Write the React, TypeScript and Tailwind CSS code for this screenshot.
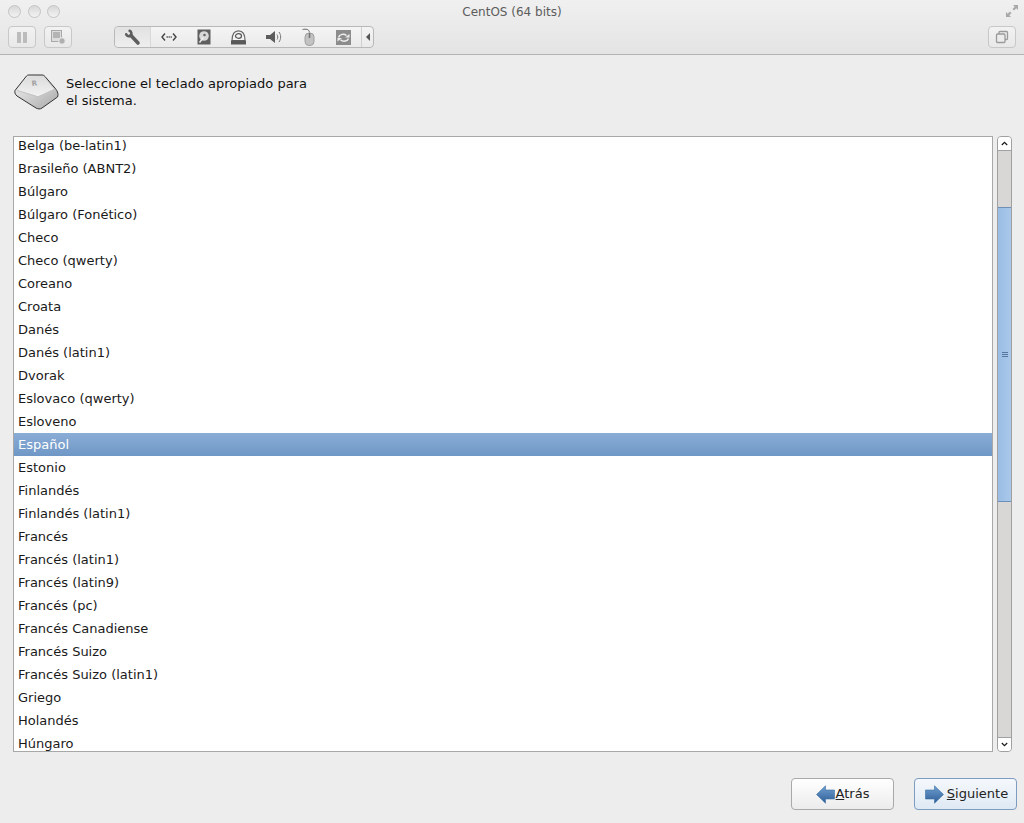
const layouts = [
  "Belga (be-latin1)",
  "Brasileño (ABNT2)",
  "Búlgaro",
  "Búlgaro (Fonético)",
  "Checo",
  "Checo (qwerty)",
  "Coreano",
  "Croata",
  "Danés",
  "Danés (latin1)",
  "Dvorak",
  "Eslovaco (qwerty)",
  "Esloveno",
  "Español",
  "Estonio",
  "Finlandés",
  "Finlandés (latin1)",
  "Francés",
  "Francés (latin1)",
  "Francés (latin9)",
  "Francés (pc)",
  "Francés Canadiense",
  "Francés Suizo",
  "Francés Suizo (latin1)",
  "Griego",
  "Holandés",
  "Húngaro",
]

const TrafficLight = () => (
  <span className="block w-[13px] h-[13px] rounded-full border border-[#c4c4c4] bg-gradient-to-b from-[#d8d8d8] to-[#f2f2f2]" />
)

const ToolButton = ({ children, className }: { children: React.ReactNode; className: string }) => (
  <div className={`h-[22px] flex items-center justify-center rounded-[4px] border border-[#c8c8c8] bg-gradient-to-b from-[#f2f2f2] to-[#e8e8e8] ${className}`}>
    {children}
  </div>
)

const Slot = ({ children }: { children: React.ReactNode }) => (
  <div className="w-[35px] shrink-0 flex items-center justify-center">{children}</div>
)

const Wrench = () => (
  <svg width="17" height="17" viewBox="0 0 17 17" fill="none" stroke="#5e5e5e" strokeLinecap="round">
    <path d="M7 6.500 L14 14" strokeWidth="3.600" />
    <path d="M2.200 5.200 C2.600 7.200 5 7.800 6.600 6.600 C8 5.200 7.600 2.600 5.600 1.800" strokeWidth="2.600" />
  </svg>
)

const Network = () => (
  <svg width="16" height="12" viewBox="0 0 16 12" fill="none" stroke="#444" strokeWidth="1.400">
    <path d="M4 2.500 L1 6 L4 9.500" />
    <path d="M12 2.500 L15 6 L12 9.500" />
    <path d="M5.500 6 H6.800 M7.600 6 H8.800 M9.600 6 H10.800" />
  </svg>
)

const HardDisk = () => (
  <svg width="14" height="16" viewBox="0 0 14 16">
    <rect x="0.500" y="0.500" width="13" height="15" fill="#5f5f5f" />
    <circle cx="7" cy="7" r="4.800" fill="#d8d8d8" />
    <circle cx="7.500" cy="6" r="1.300" fill="#666" />
    <path d="M2.500 13.500 L6.500 8.500" stroke="#f0f0f0" strokeWidth="1.400" />
  </svg>
)

const Disc = () => (
  <svg width="17" height="15" viewBox="0 0 17 15">
    <path d="M2 10.500 C2 4 4.500 0.800 8.500 0.800 C12.500 0.800 15 4 15 10.500 Z" fill="#f2f2f2" stroke="#666" strokeWidth="1.200" />
    <ellipse cx="8.500" cy="6" rx="3" ry="2.300" fill="none" stroke="#555" strokeWidth="1.200" />
    <rect x="1" y="10.500" width="15" height="4" fill="#5a5a5a" />
  </svg>
)

const Speaker = () => (
  <svg width="18" height="14" viewBox="0 0 18 14" fill="none">
    <path d="M1 5 H5 L10 1 V13 L5 9 H1 Z" fill="#5c5c5c" />
    <path d="M12 4.500 C13 6 13 8 12 9.500" stroke="#777" />
    <path d="M14 2 C16.200 5 16.200 9 14 12" stroke="#777" />
  </svg>
)

const Mouse = () => (
  <svg width="14" height="18" viewBox="0 0 14 18" fill="none">
    <path d="M0.500 1.500 C4 0.800 7 1 7.500 4.500" stroke="#666" />
    <rect x="3" y="5" width="9" height="12.500" rx="4" fill="#c2c2c2" stroke="#a0a0a0" />
    <path d="M7.500 5 V10" stroke="#777" strokeWidth="1.600" />
  </svg>
)

const Sync = () => (
  <svg width="15" height="15" viewBox="0 0 15 15">
    <rect width="15" height="15" fill="#8c8c8c" />
    <path d="M2.500 7.500 C3.500 4 8 3.300 10.500 5.500" fill="none" stroke="#eee" strokeWidth="1.500" />
    <path d="M9 7.500 L13.500 7.500 L13.500 4 Z" fill="#eee" />
    <path d="M12.500 8.500 C11.500 11.500 7 12 4.500 9.800" fill="none" stroke="#eee" strokeWidth="1.500" />
    <path d="M6 8 L1.500 8 L1.500 11.500 Z" fill="#eee" />
  </svg>
)

const Keycap = () => (
  <svg width="46" height="36" viewBox="0 0 46 36">
    <defs>
      <linearGradient id="keyFront" x1="0" y1="0" x2="1" y2="1">
        <stop offset="0" stopColor="#f6f6f6" />
        <stop offset="1" stopColor="#a8a8a8" />
      </linearGradient>
      <linearGradient id="keyTop" x1="0" y1="0" x2="0" y2="1">
        <stop offset="0" stopColor="#dcdcdc" />
        <stop offset="1" stopColor="#f2f2f2" />
      </linearGradient>
    </defs>
    <path d="M1 16.500 L12.500 2 C13 1.200 14 1 15 1 L28 1 C29.500 1 30 1.500 31 2.500 L40 13 C43 16 45 20 43.500 23 L28 34 C26 35.500 24 35 22 34 L3 22 C1 20.500 0.500 18 1 16.500 Z" fill="url(#keyFront)" stroke="#333" strokeWidth="1" />
    <path d="M3 16 L14 2.500 L29 2.500 L40 15 L26 21.500 C24.500 22.300 23 22.300 21.500 21.500 Z" fill="url(#keyTop)" />
    <path d="M3 16.500 L21.500 22 C23 22.800 24.500 22.800 26 22 L40.500 15.500" fill="none" stroke="#c4c4c4" />
    <text x="18" y="12" fontSize="7" fontWeight="bold" fill="#a0a0a0" fontFamily="DejaVu Sans, sans-serif" transform="rotate(-8 18 12)">R</text>
  </svg>
)

const ArrowLeft = () => (
  <svg width="19" height="19" viewBox="0 0 19 19">
    <defs>
      <linearGradient id="arrowL" x1="0" y1="0" x2="0" y2="1">
        <stop offset="0" stopColor="#6f9fd0" />
        <stop offset="1" stopColor="#2f5f98" />
      </linearGradient>
    </defs>
    <path d="M0.500 9.500 L9.500 0.800 V5 H18.500 V14 H9.500 V18.200 Z" fill="url(#arrowL)" stroke="#3a6ea5" strokeWidth="0.600" />
  </svg>
)

const ArrowRight = () => (
  <svg width="19" height="19" viewBox="0 0 19 19">
    <defs>
      <linearGradient id="arrowR" x1="0" y1="0" x2="0" y2="1">
        <stop offset="0" stopColor="#6f9fd0" />
        <stop offset="1" stopColor="#2f5f98" />
      </linearGradient>
    </defs>
    <path d="M18.500 9.500 L9.500 0.800 V5 H0.500 V14 H9.500 V18.200 Z" fill="url(#arrowR)" stroke="#3a6ea5" strokeWidth="0.600" />
  </svg>
)

const Chevron = ({ up }: { up?: boolean }) => (
  <svg width="7" height="5" viewBox="0 0 7 5" fill="none" stroke="#222" strokeWidth="1.300">
    <path d={up ? "M0.800 4 L3.500 1.300 L6.200 4" : "M0.800 1 L3.500 3.700 L6.200 1"} />
  </svg>
)

export default function App() {
  return (
    <div className="w-[1024px] h-[823px] overflow-hidden flex flex-col bg-[#ededed] text-[13px] text-[#1a1a1a] font-['DejaVu_Sans',sans-serif]">
      <header className="relative h-[55px] shrink-0 border-b border-[#b4b4b4] bg-gradient-to-b from-[#f0f0f0] to-[#e4e4e4] px-[8px] pt-[5px]">
        <div className="flex items-center gap-[6.500px] h-[13px]">
          <TrafficLight />
          <TrafficLight />
          <TrafficLight />
        </div>
        <div className="absolute top-[4px] inset-x-0 text-center text-[12px] leading-[17px] text-[#5c5c5c]">CentOS (64 bits)</div>
        <svg className="absolute top-[4px] right-[5px]" width="14" height="14" viewBox="0 0 14 14" fill="#a8a8a8">
          <path d="M8 1 H13 V6 L11.300 4.300 L9 6.500 L7.500 5 L9.700 2.700 Z" />
          <path d="M6 13 H1 V8 L2.700 9.700 L5 7.500 L6.500 9 L4.300 11.300 Z" />
        </svg>
        <div className="flex items-center mt-[8px]">
          <ToolButton className="w-[28px]">
            <div className="flex gap-[2px]">
              <span className="block w-[4px] h-[11px] bg-[#bcbcbc]" />
              <span className="block w-[4px] h-[11px] bg-[#bcbcbc]" />
            </div>
          </ToolButton>
          <ToolButton className="w-[28px] ml-[8px]">
            <svg width="16" height="16" viewBox="0 0 16 16">
              <rect x="1.500" y="1.500" width="10" height="11" fill="#ddd" stroke="#a8a8a8" />
              <rect x="3" y="3" width="7" height="6" fill="#b4b4b4" />
              <circle cx="12" cy="12" r="3.300" fill="#b0b0b0" stroke="#eee" />
            </svg>
          </ToolButton>
          <div className="ml-[42px] w-[260px] h-[22px] flex items-center rounded-[4px] border border-[#b8b8b8] bg-gradient-to-b from-[#f4f4f4] to-[#eaeaea]">
            <div className="w-[36px] shrink-0 h-full flex items-center justify-center rounded-l-[4px] bg-gradient-to-b from-[#e2e2e2] to-[#eeeeee] border-r border-[#d8d8d8]">
              <Wrench />
            </div>
            <Slot><Network /></Slot>
            <Slot><HardDisk /></Slot>
            <Slot><Disc /></Slot>
            <Slot><Speaker /></Slot>
            <Slot><Mouse /></Slot>
            <Slot><Sync /></Slot>
            <div className="flex-1 h-full flex items-center justify-center border-l border-[#d0d0d0]">
              <span className="block w-0 h-0 border-y-[4px] border-y-transparent border-r-[4px] border-r-[#555]" />
            </div>
          </div>
          <ToolButton className="w-[28px] ml-auto">
            <svg width="14" height="14" viewBox="0 0 14 14" fill="none" stroke="#9a9a9a" strokeWidth="1.300">
              <rect x="4" y="1.500" width="8.500" height="8" rx="1" />
              <rect x="1.500" y="4" width="8.500" height="8.500" rx="1" fill="#ececec" />
            </svg>
          </ToolButton>
        </div>
      </header>

      <section className="flex items-start pl-[14px] pt-[19px] h-[81px] shrink-0">
        <Keycap />
        <p className="ml-[6px] mt-[1px] text-[13px] leading-[17px] text-[#111]">
          Seleccione el teclado apropiado para
          <br />
          el sistema.
        </p>
      </section>

      <main className="flex pl-[13px] h-[616px] shrink-0">
        <div className="w-[980px] h-full border border-[#a8a8a8] bg-white overflow-hidden">
          <ul className="-mt-[3px]">
            {layouts.map((name) => (
              <li
                key={name}
                className={
                  name === "Español"
                    ? "h-[23px] leading-[23px] pl-[4px] text-white bg-gradient-to-b from-[#8aadd6] to-[#6f97c6]"
                    : "h-[23px] leading-[23px] pl-[4px]"
                }
              >
                {name}
              </li>
            ))}
          </ul>
        </div>
        <div className="ml-[4px] w-[15px] h-full flex flex-col rounded-[4px] border border-[#a0a0a0] bg-[#d8d7d5] overflow-hidden">
          <div className="h-[14px] shrink-0 flex items-center justify-center bg-white border-b border-[#a0a0a0]">
            <Chevron up />
          </div>
          <div className="flex-1 flex flex-col pt-[56px] pb-[235px]">
            <div className="flex-1 flex flex-col items-center justify-center gap-[1px] bg-gradient-to-r from-[#9bbde4] to-[#a9c8ea] border-y border-[#6d8fb8]">
              <span className="block w-[6px] h-[1px] bg-[#56779f]" />
              <span className="block w-[6px] h-[1px] bg-[#56779f]" />
              <span className="block w-[6px] h-[1px] bg-[#56779f]" />
            </div>
          </div>
          <div className="h-[14px] shrink-0 flex items-center justify-center bg-white border-t border-[#a0a0a0]">
            <Chevron />
          </div>
        </div>
      </main>

      <footer className="flex justify-end gap-[20px] pt-[26px] pr-[7px]">
        <button className="w-[103px] h-[32px] flex items-center justify-center gap-[1px] rounded-[4px] border border-[#a9a9a9] bg-gradient-to-b from-white to-[#ececec] text-[13px] text-[#222]">
          <ArrowLeft />
          <span><span className="underline">A</span>trás</span>
        </button>
        <button className="w-[103px] h-[32px] flex items-center justify-center gap-[3px] pl-[2px] rounded-[4px] border border-[#7c9cc0] bg-gradient-to-b from-[#f5f8fc] to-[#dfe9f4] text-[13px] text-[#222]">
          <ArrowRight />
          <span><span className="underline">S</span>iguiente</span>
        </button>
      </footer>
    </div>
  )
}
